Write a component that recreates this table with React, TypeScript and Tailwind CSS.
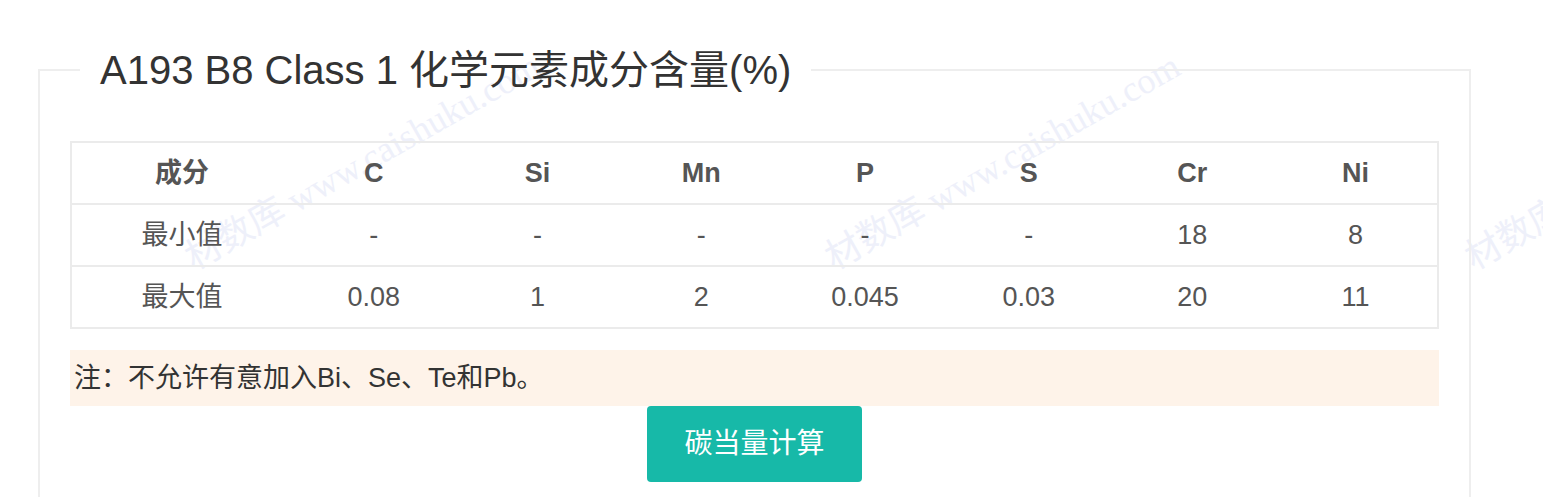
const sans = '"Liberation Sans", "Noto Sans CJK SC", Arial, sans-serif';

const header = ["成分", "C", "Si", "Mn", "P", "S", "Cr", "Ni"];
const rows = [
  ["最小值", "-", "-", "-", "-", "-", "18", "8"],
  ["最大值", "0.08", "1", "2", "0.045", "0.03", "20", "11"],
];

const Watermark = ({ left }: { left: number }) => (
  <div
    className="absolute pointer-events-none whitespace-nowrap text-[36px] leading-none text-[#eef0fa] origin-bottom-left -rotate-[29.5deg]"
    style={{ left, top: 240, fontFamily: '"Liberation Serif", "Noto Sans CJK SC", serif' }}
  >
    材数库 www.caishuku.com
  </div>
);

export default function App() {
  return (
    <div className="relative bg-white min-h-[497px] overflow-hidden" style={{ fontFamily: sans }}>
      <Watermark left={197} />
      <Watermark left={837} />
      <Watermark left={1477} />

      <div className="relative pl-[38px] pt-[47px]">
        <fieldset className="w-[1433px] border-2 border-[#eeeeee] px-[30px] pt-[48px] pb-[40px]">
          <legend className="ml-[10px] px-[20px] text-[40px] leading-[46px] text-[#333333]">
            A193 B8 Class 1 化学元素成分含量(%)
          </legend>

          {/* composition table */}
          <table className="w-full border-collapse table-fixed border-2 border-[#ebebeb] text-[27px] text-[#555555]">
            <colgroup>
              <col className="w-[221px]" />
            </colgroup>
            <thead>
              <tr>
                {header.map((h) => (
                  <th key={h} className="h-[62px] border-y-2 border-[#ebebeb] text-center font-bold p-0">
                    {h}
                  </th>
                ))}
              </tr>
            </thead>
            <tbody>
              {rows.map((r) => (
                <tr key={r[0]}>
                  {r.map((c, i) => (
                    <td key={i} className="h-[62px] border-y-2 border-[#ebebeb] text-center p-0">
                      {c}
                    </td>
                  ))}
                </tr>
              ))}
            </tbody>
          </table>

          <div className="mt-[21px] h-[56px] bg-[#fef3e9] flex items-center pl-[4px] text-[27px] text-[#333333]">
            注：不允许有意加入Bi、Se、Te和Pb。
          </div>

          <div className="flex justify-center">
            <button className="w-[215px] h-[76px] rounded-[4px] bg-[#17b9a8] text-white text-[28px]">
              碳当量计算
            </button>
          </div>
        </fieldset>
      </div>
    </div>
  );
}
